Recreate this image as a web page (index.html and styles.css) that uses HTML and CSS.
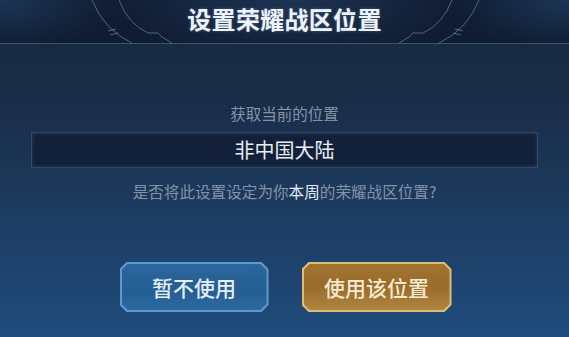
FILE: index.html
```html
<!DOCTYPE html>
<html lang="zh">
<head>
<meta charset="utf-8">
<link rel="stylesheet" href="styles.css">
</head>
<body>
<div class="dialog">
  <div class="header">
    <svg class="deco" width="569" height="43" viewBox="0 0 569 43">
      <g fill="none" stroke="#7f9fc4" stroke-opacity="0.55" stroke-width="1">
        <path d="M92,0 Q104,30 132,43"/>
        <path d="M119,0 Q128,24 148,33 L158,33 L162,37 L172,43"/>
        <path d="M108,31 L116,29 M110,35 L118,33"/>
        <path d="M479,0 Q467,30 439,43"/>
        <path d="M452,0 Q443,24 423,33 L413,33 L409,37 L399,43"/>
        <path d="M463,31 L455,29 M461,35 L453,33"/>
      </g>
    </svg>
    <h1 class="title">设置荣耀战区位置</h1>
  </div>
  <div class="content">
    <p class="label">获取当前的位置</p>
    <div class="field">非中国大陆</div>
    <p class="question">是否将此设置设定为你<span class="em">本周</span>的荣耀战区位置?</p>
    <div class="actions">
      <div class="btn btn-blue"><div class="btn-inner">暂不使用</div></div>
      <div class="btn btn-gold"><div class="btn-inner">使用该位置</div></div>
    </div>
  </div>
</div>
</body>
</html>
```
FILE: styles.css
```css
* { box-sizing: border-box; }
html, body {
  margin: 0;
  padding: 0;
  width: 569px;
  height: 337px;
  overflow: hidden;
  background: #1a2c47;
  font-family: "Noto Sans CJK SC", "Noto Sans", sans-serif;
}
.dialog {
  width: 569px;
  height: 337px;
  display: flex;
  flex-direction: column;
  background: linear-gradient(180deg, #18293f 0%, #1a2d48 30%, #1d3f66 70%, #1f4c7c 100%);
}
.header {
  position: relative;
  height: 44px;
  flex: none;
  border-bottom: 1px solid #3b5474;
  background:
    radial-gradient(ellipse 180px 60px at 286px 0px, rgba(40,70,110,0.55), rgba(40,70,110,0) 100%),
    radial-gradient(ellipse 120px 50px at 0px 0px, rgba(35,70,110,0.6), rgba(35,70,110,0) 100%),
    radial-gradient(ellipse 120px 50px at 569px 0px, rgba(35,70,110,0.6), rgba(35,70,110,0) 100%),
    #101c31;
  display: flex;
  align-items: flex-start;
  justify-content: center;
}
.deco {
  position: absolute;
  left: 0;
  top: 0;
}
.title {
  position: relative;
  margin: 4px 0 0;
  font-size: 24px;
  font-weight: 700;
  color: #eef3fa;
  letter-spacing: 0.3px;
  line-height: 30px;
  text-shadow: 0 0 3px rgba(150,190,240,0.4);
}
.content {
  flex: 1;
  display: flex;
  flex-direction: column;
  align-items: center;
  padding-top: 59px;
}
.label {
  margin: 0;
  font-size: 15.5px;
  line-height: 20px;
  color: #8593a8;
}
.field {
  align-self: stretch;
  margin: 9px 31px 0 31px;
  height: 36px;
  border: 1px solid #34496a;
  background: #122139;
  box-shadow: inset 0 0 4px rgba(60,90,130,0.5);
  color: #e8edf4;
  font-size: 20px;
  line-height: 34px;
  text-align: center;
}
.question {
  margin: 13px 0 0;
  font-size: 15.6px;
  line-height: 20px;
  color: #8593a8;
}
.question .em { color: #e3e9f2; }
.actions {
  margin-top: 61px;
  display: flex;
  gap: 33px;
  padding-left: 2px;
}
.btn {
  width: 149px;
  height: 50px;
  padding: 2px;
  clip-path: polygon(7px 0, calc(100% - 7px) 0, 100% 7px, 100% calc(100% - 7px), calc(100% - 7px) 100%, 7px 100%, 0 calc(100% - 7px), 0 7px);
}
.btn-inner {
  width: 100%;
  height: 100%;
  display: flex;
  align-items: center;
  justify-content: center;
  font-size: 21px;
  font-weight: 500;
  clip-path: polygon(6px 0, calc(100% - 6px) 0, 100% 6px, 100% calc(100% - 6px), calc(100% - 6px) 100%, 6px 100%, 0 calc(100% - 6px), 0 6px);
}
.btn-blue { background: #5c9acb; }
.btn-blue .btn-inner {
  background: linear-gradient(180deg, #2b679c 0%, #245e93 60%, #2a6ba0 100%);
  color: #e4eef8;
}
.btn-gold { background: #dcbc78; width: 150px; }
.btn-gold .btn-inner {
  background: linear-gradient(180deg, #a0732f 0%, #9a6c2b 50%, #b08540 100%);
  color: #f6ead0;
}
```
